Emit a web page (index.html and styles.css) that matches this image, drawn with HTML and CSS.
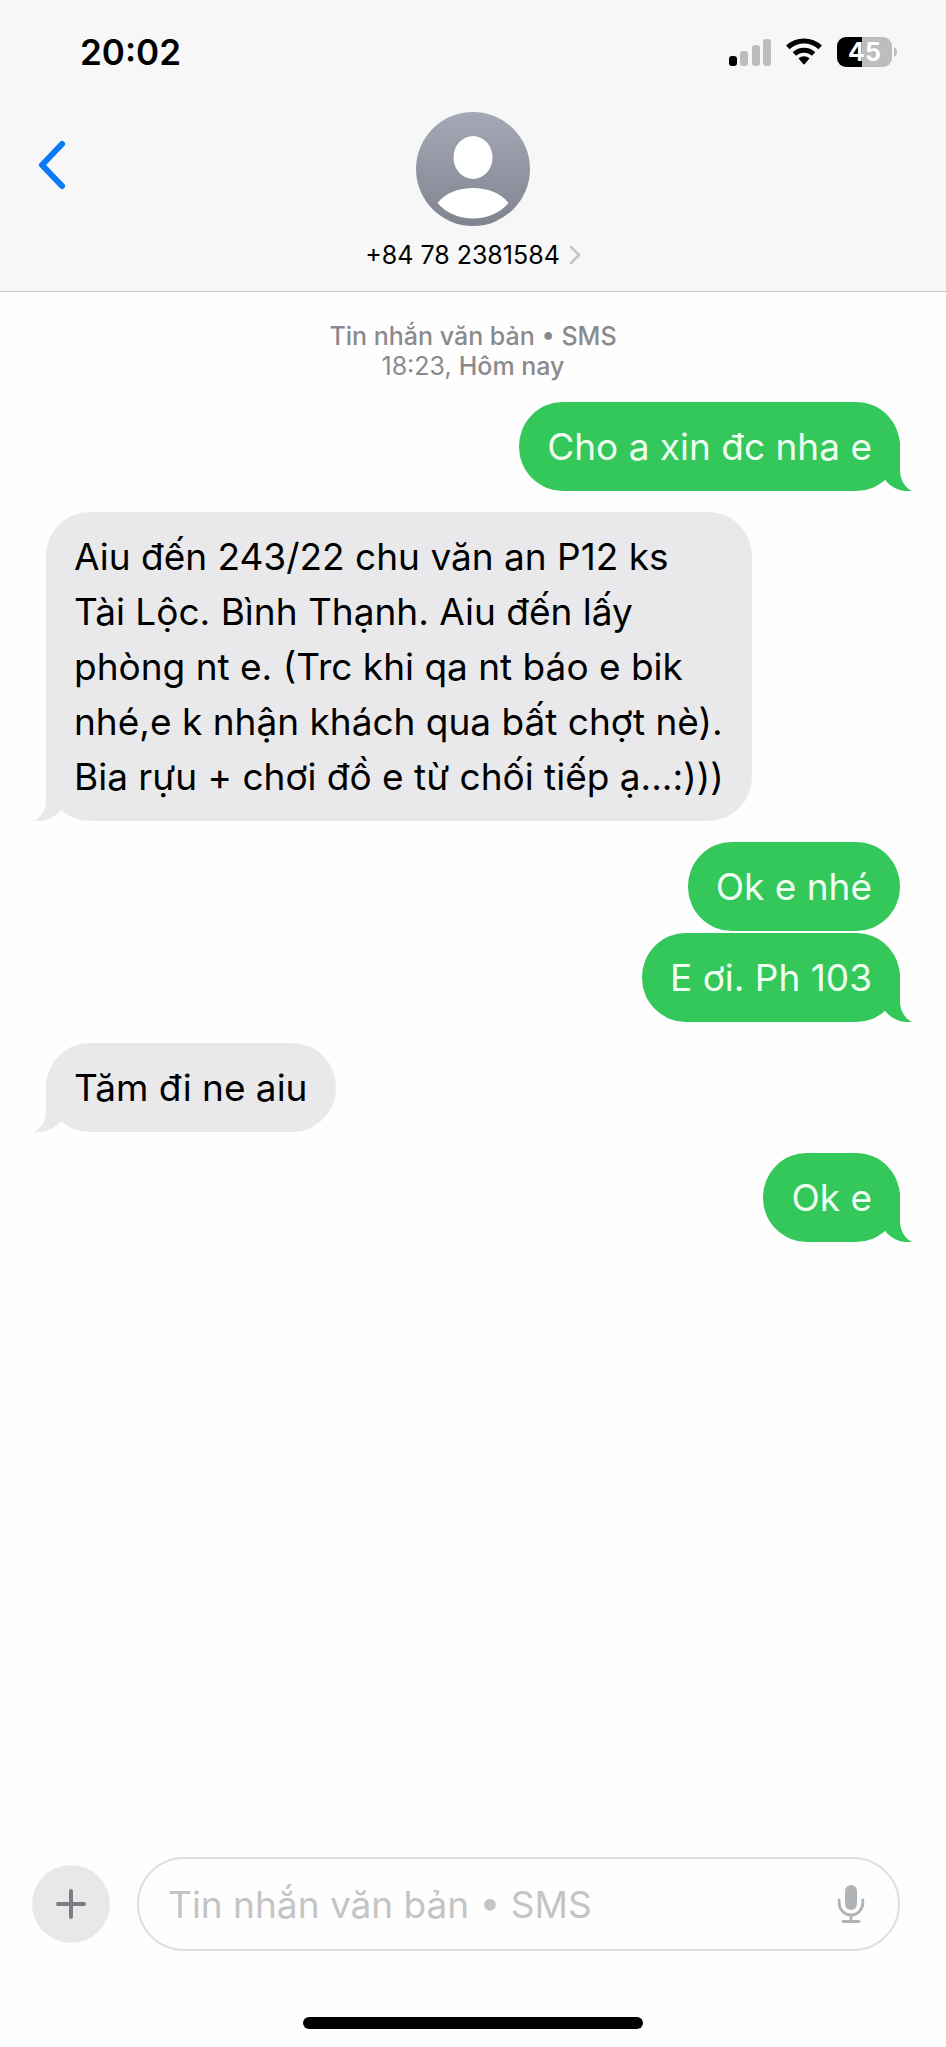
FILE: index.html
```html
<!DOCTYPE html>
<html lang="vi">
<head>
<meta charset="utf-8">
<meta name="viewport" content="width=device-width, initial-scale=1">
<title>+84 78 2381584</title>
<link rel="stylesheet" href="styles.css">
</head>
<body>
<svg class="defs" width="0" height="0" aria-hidden="true">
  <symbol id="tail" viewBox="0 0 46 50"><path d="M34 0V29C34 40 40 47 46 50C36 51 27 48 20 40L6 20Z"/></symbol>
</svg>
<header class="header">
  <div class="status">
    <time class="clock">20:02</time>
    <div class="indicators">
      <svg class="signal" width="42" height="28" viewBox="0 0 42 28" aria-hidden="true">
        <rect x="0" y="18" width="8" height="10" rx="3" fill="#000"/>
        <rect x="11" y="13" width="8" height="15" rx="3" fill="#bdbdbd"/>
        <rect x="23" y="7" width="8" height="21" rx="3" fill="#bdbdbd"/>
        <rect x="34" y="1" width="8" height="27" rx="3" fill="#bdbdbd"/>
      </svg>
      <svg class="wifi" width="36" height="28" viewBox="0 0 36 28" aria-hidden="true">
        <g fill="none" stroke="#000" stroke-width="5">
          <path d="M1.8 9.4A23.6 23.6 0 0 1 34.2 9.4"/>
          <path d="M8.4 16A14 14 0 0 1 27.6 16"/>
        </g>
        <path d="M12.4 20.2Q18 16.4 23.6 20.2L18.8 26Q18 26.9 17.2 26Z"/>
      </svg>
      <div class="battery"><span class="battery-level">45</span></div>
      <svg class="nub" width="3" height="10" viewBox="0 0 3 10" aria-hidden="true"><path d="M0 0Q3 1.6 3 5T0 10Z" fill="#bdbdbd"/></svg>
    </div>
  </div>
  <div class="contact-bar">
    <button class="back" type="button" aria-label="Quay lại">
      <svg width="28" height="50" viewBox="0 0 28 50" aria-hidden="true"><path d="M24 4L4 25L24 46" fill="none" stroke="#0a7af5" stroke-width="6" stroke-linecap="round" stroke-linejoin="round"/></svg>
    </button>
    <button class="contact" type="button">
      <svg class="avatar" width="114" height="114" viewBox="0 0 114 114" aria-hidden="true">
        <defs><linearGradient id="av" x1="0" y1="0" x2="0" y2="1"><stop offset="0" stop-color="#a4a9b6"/><stop offset="1" stop-color="#81848f"/></linearGradient></defs>
        <circle cx="57" cy="57" r="57" fill="url(#av)"/>
        <ellipse cx="57" cy="45.5" rx="19.5" ry="21.5" fill="#fff"/>
        <path d="M21.5 91C29 81 43 76 57 76S85 81 92.5 91C84 101 71 106.5 57 106.5S30 101 21.5 91Z" fill="#fff"/>
      </svg>
      <span class="number">+84 78 2381584
        <svg width="12" height="20" viewBox="0 0 12 20" aria-hidden="true"><path d="M2 2L10 10L2 18" fill="none" stroke="#c6c6c8" stroke-width="2.5" stroke-linecap="round" stroke-linejoin="round"/></svg>
      </span>
    </button>
  </div>
</header>
<main class="thread">
  <p class="stamp"><b>Tin nhắn văn bản • SMS</b><br>18:23, <b>Hôm nay</b></p>
  <div class="group sent">
    <p class="bubble">Cho a xin đc nha e<svg class="tail" aria-hidden="true"><use href="#tail"/></svg></p>
  </div>
  <div class="group received">
    <p class="bubble">Aiu đến 243/22 chu văn an P12 ks<br>Tài Lộc. Bình Thạnh. Aiu đến lấy<br>phòng nt e. (Trc khi qa nt báo e bik<br>nhé,e k nhận khách qua bất chợt nè).<br>Bia rựu + chơi đồ e từ chối tiếp ạ...:)))<svg class="tail" aria-hidden="true"><use href="#tail"/></svg></p>
  </div>
  <div class="group sent">
    <p class="bubble">Ok e nhé</p>
    <p class="bubble">E ơi. Ph 103<svg class="tail" aria-hidden="true"><use href="#tail"/></svg></p>
  </div>
  <div class="group received">
    <p class="bubble">Tăm đi ne aiu<svg class="tail" aria-hidden="true"><use href="#tail"/></svg></p>
  </div>
  <div class="group sent">
    <p class="bubble">Ok e<svg class="tail" aria-hidden="true"><use href="#tail"/></svg></p>
  </div>
</main>
<footer class="footer">
  <form class="composer">
    <button class="add" type="button" aria-label="Thêm">
      <svg width="30" height="30" viewBox="0 0 30 30" aria-hidden="true"><path d="M15 2V28M2 15H28" stroke="#7b7d80" stroke-width="4" stroke-linecap="round"/></svg>
    </button>
    <div class="field">
      <input class="input" type="text" placeholder="Tin nhắn văn bản • SMS" aria-label="Tin nhắn văn bản">
      <button class="mic" type="button" aria-label="Đọc chính tả">
        <svg width="28" height="40" viewBox="0 0 28 40" aria-hidden="true">
          <rect x="8" y="1" width="12" height="25" rx="6" fill="#b1b4b7"/>
          <path d="M2.2 16V19A11.8 12 0 0 0 25.8 19V16M14 31V37M6 37.5H22" fill="none" stroke="#b1b4b7" stroke-width="2.8" stroke-linecap="round"/>
        </svg>
      </button>
    </div>
  </form>
  <div class="home"></div>
</footer>
</body>
</html>
```

FILE: styles.css
```css
* { box-sizing: border-box; }

body {
  margin: 0;
  min-height: 100vh;
  display: flex;
  flex-direction: column;
  background: #fefefe;
  color: #000;
  font-family: Inter, "Noto Sans", sans-serif;
}

p { margin: 0; }

button {
  border: 0;
  padding: 0;
  background: none;
  color: inherit;
  font: inherit;
}

.defs { position: absolute; }

.header {
  background: #f6f7f6;
  border-bottom: 1px solid #c6c7c7;
  padding: 30px 0 21px;
}

.status {
  display: flex;
  justify-content: space-between;
  align-items: center;
  height: 44px;
  padding: 0 49px 0 80px;
}

.clock {
  font-size: 35px;
  font-weight: 600;
}

.indicators {
  display: flex;
  align-items: center;
}

.wifi { margin: 0 15px; }

.battery {
  width: 55px;
  height: 30px;
  border-radius: 9px;
  background: linear-gradient(to right, #000 45%, #bdbdbd 45%);
  display: flex;
  align-items: center;
  justify-content: center;
}

.battery-level {
  color: #fff;
  font-size: 25px;
  font-weight: 700;
  line-height: 30px;
}

.nub { margin-left: 2px; }

.contact-bar {
  display: grid;
  grid-template-columns: 1fr auto 1fr;
  padding: 38px 38px 0;
}

.back {
  justify-self: start;
  align-self: start;
  margin-top: 28px;
  display: flex;
}

.contact {
  display: flex;
  flex-direction: column;
  align-items: center;
  gap: 14px;
}

.number {
  display: flex;
  align-items: center;
  gap: 9px;
  font-size: 25px;
  line-height: 30px;
}

.thread {
  flex: 1;
  display: flex;
  flex-direction: column;
  gap: 21px;
  padding: 29px 46px;
}

.stamp {
  color: #8a8a8d;
  font-size: 25px;
  line-height: 30px;
  text-align: center;
}

.stamp b { font-weight: 500; }

.group {
  display: flex;
  flex-direction: column;
  gap: 2px;
}

.bubble {
  position: relative;
  padding: 17px 28px;
  border-radius: 44px;
  font-size: 37px;
  line-height: 55px;
}

.sent { align-items: flex-end; }
.received { align-items: flex-start; }

.sent .bubble {
  background: #34c759;
  color: #effff2;
}

.received .bubble { background: #e9e9eb; }

.tail {
  position: absolute;
  bottom: 0;
  width: 46px;
  height: 50px;
}

.sent .tail {
  right: -12px;
  fill: #34c759;
}

.received .tail {
  left: -12px;
  fill: #e9e9eb;
  transform: scaleX(-1);
}

.footer {
  display: flex;
  flex-direction: column;
  gap: 66px;
  padding-bottom: 18px;
}

.composer {
  display: flex;
  align-items: center;
  gap: 27px;
  padding: 0 46px 0 32px;
}

.add {
  display: flex;
  align-items: center;
  justify-content: center;
  width: 78px;
  height: 78px;
  border-radius: 50%;
  background: #e6e8e9;
}

.field {
  flex: 1;
  display: flex;
  align-items: center;
  height: 94px;
  padding: 0 33px 0 29px;
  border: 2px solid #dedede;
  border-radius: 47px;
}

.input {
  flex: 1;
  min-width: 0;
  padding: 0;
  border: 0;
  outline: 0;
  background: none;
  font: inherit;
  font-size: 37px;
}

.input::placeholder { color: #c4c4c4; }

.mic { display: flex; }

.home {
  align-self: center;
  width: 36%;
  height: 12px;
  border-radius: 6px;
  background: #000;
}
```
